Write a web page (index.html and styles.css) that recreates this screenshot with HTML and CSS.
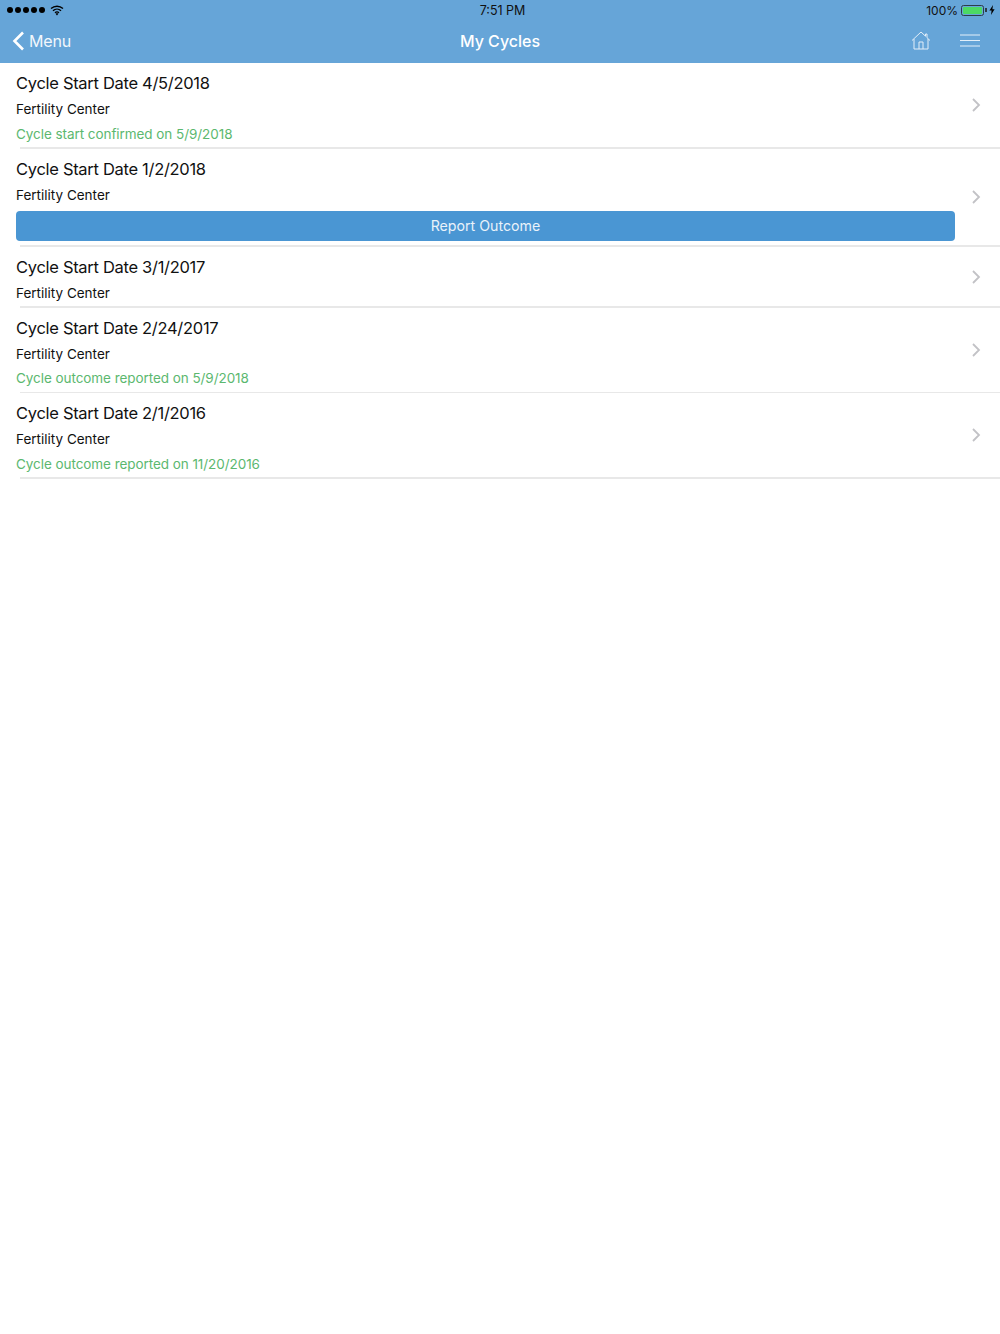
FILE: index.html
```html
<!DOCTYPE html>
<html lang="en">
<head>
<meta charset="utf-8">
<title>My Cycles</title>
<link rel="stylesheet" href="styles.css">
</head>
<body>
<header class="top">
  <div class="status">
    <div class="status-left">
      <span class="dots"><i></i><i></i><i></i><i></i><i></i></span>
      <svg class="wifi" width="14" height="11" viewBox="0 0 14 11"><path d="M1 3.6C4.4.4 9.6.4 13 3.6M3 5.7c2.3-2.1 5.7-2.1 8 0M5 7.7c1.200-1 2.800-1 4 0" fill="none" stroke="#000" stroke-width="1.400"/><path d="M5.600 8.700c.8-.6 2-.6 2.800 0L7 10.400z" fill="#000"/></svg>
    </div>
    <div class="clock">7:51 PM</div>
    <div class="status-right">
      <span>100%</span>
      <span class="battery"><span class="battery-fill"></span></span>
      <span class="battery-tip"></span>
      <svg class="bolt" width="6" height="10" viewBox="0 0 6 10"><path d="M4 0 .4 5.600h2.200L2 10l3.600-5.800H3.400z" fill="#000"/></svg>
    </div>
  </div>
  <nav class="nav">
    <div class="back">
      <svg width="13" height="20" viewBox="0 0 13 20"><path d="M11 1.500 2.500 10l8.500 8.500" fill="none" stroke="#fff" stroke-width="2.600"/></svg>
      <span>Menu</span>
    </div>
    <h1 class="title">My Cycles</h1>
    <div class="actions">
      <svg width="20" height="19" viewBox="0 0 20 19"><path d="M1 9.500 10 1l4.500 4.200V3h1.500v3.700l3 2.800M3 8v10h14V8M8 18v-7h4v7" fill="none" stroke="#e3eff9" stroke-width="1"/></svg>
      <svg width="20" height="13" viewBox="0 0 20 13"><path d="M0 1h20M0 6.500h20M0 12h20" fill="none" stroke="#e3eff9" stroke-width="1"/></svg>
    </div>
  </nav>
</header>
<main class="list">
  <article class="row">
    <div class="body">
      <h2 class="date">Cycle Start Date 4/5/2018</h2>
      <p class="center">Fertility Center</p>
      <p class="note">Cycle start confirmed on 5/9/2018</p>
    </div>
    <svg class="chev" width="9" height="14" viewBox="0 0 9 14"><path d="M1 1l6 6-6 6" fill="none" stroke="#c2c2c6" stroke-width="1.800"/></svg>
  </article>
  <article class="row">
    <div class="body">
      <h2 class="date">Cycle Start Date 1/2/2018</h2>
      <p class="center">Fertility Center</p>
      <button class="report">Report Outcome</button>
    </div>
    <svg class="chev" width="9" height="14" viewBox="0 0 9 14"><path d="M1 1l6 6-6 6" fill="none" stroke="#c2c2c6" stroke-width="1.800"/></svg>
  </article>
  <article class="row">
    <div class="body">
      <h2 class="date">Cycle Start Date 3/1/2017</h2>
      <p class="center">Fertility Center</p>
    </div>
    <svg class="chev" width="9" height="14" viewBox="0 0 9 14"><path d="M1 1l6 6-6 6" fill="none" stroke="#c2c2c6" stroke-width="1.800"/></svg>
  </article>
  <article class="row">
    <div class="body">
      <h2 class="date">Cycle Start Date 2/24/2017</h2>
      <p class="center">Fertility Center</p>
      <p class="note">Cycle outcome reported on 5/9/2018</p>
    </div>
    <svg class="chev" width="9" height="14" viewBox="0 0 9 14"><path d="M1 1l6 6-6 6" fill="none" stroke="#c2c2c6" stroke-width="1.800"/></svg>
  </article>
  <article class="row">
    <div class="body">
      <h2 class="date">Cycle Start Date 2/1/2016</h2>
      <p class="center">Fertility Center</p>
      <p class="note">Cycle outcome reported on 11/20/2016</p>
    </div>
    <svg class="chev" width="9" height="14" viewBox="0 0 9 14"><path d="M1 1l6 6-6 6" fill="none" stroke="#c2c2c6" stroke-width="1.800"/></svg>
  </article>
</main>
</body>
</html>
```
FILE: styles.css
```css
* { box-sizing: border-box; }
html, body { margin: 0; padding: 0; background: #fff; }
body { font-family: Inter, "Liberation Sans", sans-serif; color: #111; height: 1334px; overflow: hidden; }
p, h1, h2 { margin: 0; font-weight: 400; }

.top { background: #66a5d8; height: 63px; display: flex; flex-direction: column; }
.status { height: 20px; display: grid; grid-template-columns: 1fr auto 1fr; align-items: center; padding: 0 5px 0 6px; font-size: 12.500px; color: #111; }
.status-left { display: flex; align-items: center; gap: 5px; padding-left: 1px; }
.dots { display: flex; gap: 2px; }
.dots i { width: 6px; height: 6px; border-radius: 50%; background: #000; display: block; }
.clock { text-align: center; padding-left: 4px; letter-spacing: 0; }
.status-right { display: flex; align-items: center; justify-content: flex-end; font-size: 12px; }
.battery { width: 23px; height: 11px; border: 1px solid #2d3d48; border-radius: 2.500px; padding: 1px; margin-left: 3px; display: block; }
.battery-fill { display: block; height: 100%; background: #4cd964; border-radius: 1px; }
.battery-tip { width: 1.500px; height: 4px; background: #2d3d48; margin-left: 1px; }
.bolt { margin-left: 2.500px; }

.nav { flex: 1; display: grid; grid-template-columns: 1fr auto 1fr; align-items: center; padding: 0 20px 2px; color: #fff; }
.back { display: flex; align-items: center; gap: 4px; margin-left: -8px; font-size: 16px; letter-spacing: -0.2px; color: #f2f7fc; }
.title { font-size: 16px; font-weight: 500; color: #fff; }
.actions { display: flex; justify-content: flex-end; align-items: center; gap: 29px; }

.list { display: flex; flex-direction: column; }
.row { position: relative; display: flex; align-items: center; padding: 0 19px 0 16px; }
.row::after { content: ""; position: absolute; left: 20px; right: 0; bottom: 0; height: 1.500px; background: #e8e8e8; }
.row:nth-child(1), .row:nth-child(4), .row:nth-child(5) { height: 85.500px; }
.row:nth-child(2) { height: 98px; }
.row:nth-child(3) { height: 61px; }
.body { flex: 1; min-width: 0; padding-right: 17px; align-self: flex-start; }
.date { font-size: 16.500px; line-height: 22px; letter-spacing: -0.3px; padding-top: 9px; color: #111; }
.center { font-size: 13.500px; line-height: 18px; margin-top: 6px; color: #111; }
.note { font-size: 13.500px; line-height: 18px; letter-spacing: -0.06px; margin-top: 6.500px; color: #5cb86f; }
.report { display: block; width: 100%; height: 30px; margin-top: 7px; border: 0; border-radius: 4px; background: #4a96d3; color: #e9f2fa; font: 400 14.200px Inter, "Liberation Sans", sans-serif; }
.chev { flex: none; margin-bottom: 1px; }
```
